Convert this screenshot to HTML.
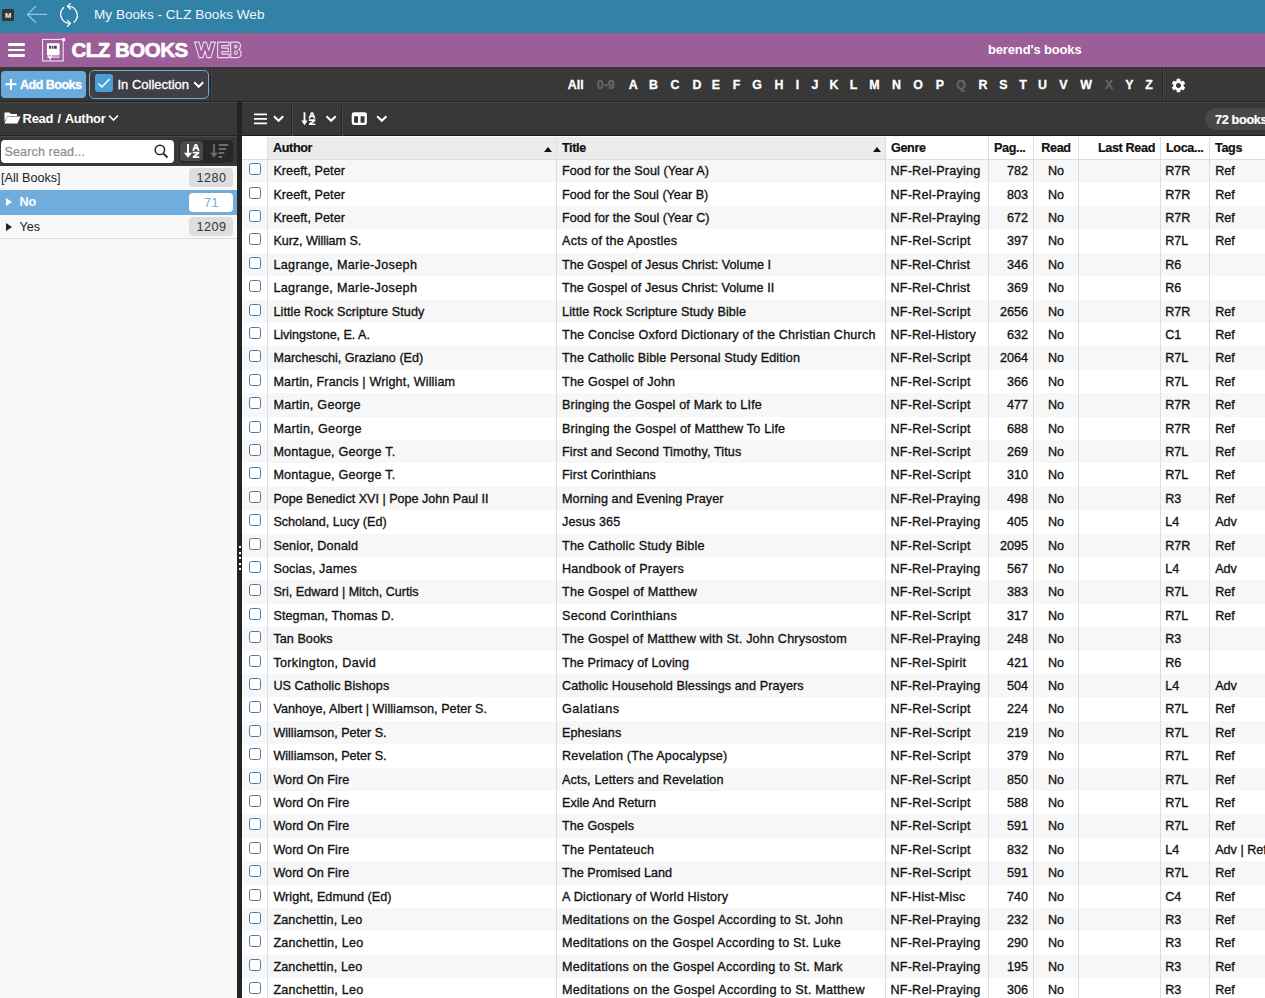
<!DOCTYPE html>
<html><head><meta charset="utf-8">
<style>
*{box-sizing:border-box;margin:0;padding:0}
html,body{width:1265px;height:998px;overflow:hidden;background:#f8f8f8;font-family:"Liberation Sans",sans-serif;}
.abs{position:absolute}
#tb{position:absolute;left:0;top:0;width:1265px;height:33px;background:#3282a7;}
#tb .m{position:absolute;left:2px;top:9px;width:12px;height:12px;background:#353535;color:#f4f4f4;font-size:7.5px;line-height:14px;text-align:center;font-weight:700;border-radius:1.5px}
#tb .ttl{position:absolute;left:94px;top:7px;font-size:13.6px;color:#eef8fc;line-height:16px;white-space:nowrap}
#pb{position:absolute;left:0;top:33px;width:1265px;height:34px;background:#9b5e98;}
#pb .ham{position:absolute;left:8px;top:10px;width:17px;height:14px}
#pb .ham i{position:absolute;left:0;width:17px;height:2.6px;background:#fff;border-radius:1.3px}
#pb .logo{position:absolute;left:42px;top:6px;width:23px;height:23px}
#pb .brand{position:absolute;left:71.5px;top:5px;font-size:20.5px;font-weight:700;color:#fff;white-space:nowrap;line-height:24px;-webkit-text-stroke:0.7px #fff;letter-spacing:-0.5px}
#pb .web{position:absolute;left:195px;top:5px;font-size:20.5px;font-weight:700;color:transparent;-webkit-text-stroke:1px #f3dcf3;white-space:nowrap;line-height:24px;letter-spacing:-0.2px}
#pb .user{position:absolute;left:988px;top:9px;font-size:13px;font-weight:700;color:#fff;white-space:nowrap;line-height:16px;letter-spacing:-0.15px}
#t1{position:absolute;left:0;top:67px;width:1265px;height:35px;background:#383838;border-bottom:1px solid #232323}
#addb{position:absolute;left:1px;top:4px;width:85px;height:27px;background:#6aabdd;border-radius:4px;color:#fff}
#addb .pl{position:absolute;left:4px;top:7.5px;width:12px;height:11px}
#addb .tx{position:absolute;left:19px;top:7px;font-size:12.6px;font-weight:700;line-height:15px;letter-spacing:-0.55px;white-space:nowrap;-webkit-text-stroke:0.3px #fff}
#coll{position:absolute;left:89px;top:3px;width:120px;height:29px;background:#3e3e45;border:1.3px solid #7ea6c9;border-radius:5px;color:#fff}
#coll .cbx{position:absolute;left:4.9px;top:2.9px;width:18px;height:18px;background:#4aa0d6;border-radius:3px}
#coll .tx{position:absolute;left:27.5px;top:6px;font-size:13px;line-height:15px;white-space:nowrap;letter-spacing:0px;-webkit-text-stroke:0.3px #fff}
.vd{position:absolute;width:1px;background:#2a2a2a}
#letters{position:absolute;left:560px;top:11px;height:14px;white-space:nowrap;font-size:12.4px;font-weight:700;line-height:14px}
#letters span{position:absolute;top:0;width:30px;text-align:center}
#letters .on{color:#fff;-webkit-text-stroke:0.3px #fff}
#letters .off{color:#666;-webkit-text-stroke:0.3px #666}
/* left panel */
#lph{position:absolute;left:0;top:102px;width:237px;height:34px;background:#383838;border-top:1px solid #4a4a4a;border-bottom:1px solid #242424}
#lph .tx{position:absolute;left:22.6px;top:8px;font-size:13px;font-weight:700;color:#fff;line-height:15px;white-space:nowrap;letter-spacing:-0.3px;word-spacing:1px}
#lps{position:absolute;left:0;top:136px;width:237px;height:30px;background:#383838;border-top:1px solid #4a4a4a}
#search{position:absolute;left:1px;top:3px;width:173px;height:23px;background:#fff;border-radius:4px}
#search .ph{position:absolute;left:3.5px;top:4.5px;font-size:12.6px;color:#8c8c8c;line-height:14px;letter-spacing:0.1px;-webkit-text-stroke:0.2px #8c8c8c}
#sortg{position:absolute;left:179px;top:3px;width:54px;height:23px;background:#272727;border-radius:5px}
#sortg .act{position:absolute;left:1.3px;top:1.3px;width:23.2px;height:19.7px;background:#4a4a4a;border-radius:4px}
#tree{position:absolute;left:0;top:166px;width:237px}
.tr{position:relative;height:24.3px;background:#f8f8f8;color:#222;font-size:12.6px;line-height:16px}
.tr .lb{position:absolute;top:4px;white-space:nowrap}
.tr .ct{position:absolute;left:189px;top:2px;width:44px;height:19px;border-radius:4px;background:#dedede;text-align:center;line-height:20px;color:#333;letter-spacing:0.5px;padding-left:1px}
.tr.sel{background:#70addd;color:#fff;font-weight:700}
.tr.sel .ct{background:#fff;color:#70addd;font-weight:400}
.tri{position:absolute;left:5.5px;top:8px;width:0;height:0;border-left:6px solid #222;border-top:4.5px solid transparent;border-bottom:4.5px solid transparent}
#splt{position:absolute;left:237px;top:102px;width:5px;height:897px;background:#232323}
#splt i{position:absolute;left:2px;width:2px;height:2px;background:#fff}
/* main */
#t2{position:absolute;left:242px;top:102px;width:1023px;height:34px;background:#373737;border-top:1px solid #4a4a4a;border-bottom:1px solid #1c1c1c}
#pill{position:absolute;left:963px;top:4.5px;width:90px;height:22.5px;background:#484848;border-radius:11px;color:#fff;font-weight:700;font-size:12.6px;line-height:24px;-webkit-text-stroke:0.2px #fff;padding-left:10px;white-space:nowrap;letter-spacing:-0.3px}
#grid{position:absolute;left:242px;top:136px;width:1023px;height:862px;background:#fff;overflow:hidden}
.hd{position:absolute;z-index:2;left:0;top:0;width:1100px;height:24px;background:#fff;border-bottom:1px solid #dcdcdc;border-top:1px solid #fdfdfd}
.hd .c{font-weight:700;height:22px;line-height:22.5px;letter-spacing:-0.35px;padding-left:5px;-webkit-text-stroke:0.2px #111}
.hd .srt{background:#ececec}
.r{position:absolute;left:0;width:1100px;height:23.4px;background:#fff}
.r.odd{background:#f7f7f7}
.c{position:absolute;top:0;height:100%;white-space:nowrap;overflow:hidden;font-size:12.6px;line-height:24.2px;color:#111;padding:0 6px;-webkit-text-stroke:0.32px #111;border-right:1px solid #dedede;text-overflow:clip}
.cb{left:0;width:26px;border-right:1px solid #dcdfe3;padding:0}
.au{left:26px;width:289px;padding-left:5.4px}
.ti{left:315px;width:329px;padding-left:5px}
.ge{left:644px;width:103px;padding-left:4.4px}
.pg{left:747px;width:45px;text-align:right;padding-right:5px}
.rd{left:792px;width:45px;text-align:center;padding:0}
.lr{left:837px;width:82px;text-align:right;padding-right:5px}
.lo{left:919px;width:49px;padding-left:4.2px}
.tg{left:968px;width:100px;border-right:none;padding-left:5.2px}
.chk{position:absolute;left:6.7px;top:3.6px;width:12.4px;height:12.2px;border:1.7px solid #4f7aa2;border-radius:2.5px;background:#fff}
.sortar{position:absolute;top:10px;width:0;height:0;border-left:4.5px solid transparent;border-right:4.5px solid transparent;border-bottom:5px solid #111}
</style></head>
<body>
<div id="tb">
  <div class="m">M</div>
  <svg class="abs" style="left:26px;top:5px" width="22" height="20" viewBox="0 0 22 20"><path d="M21 9.4H1.5M10 1L1.5 9.4l8.5 8.4" fill="none" stroke="#93c6df" stroke-width="1.2"/></svg>
  <svg class="abs" style="left:58px;top:3px" width="24" height="26" viewBox="0 0 24 26"><g fill="none" stroke="#fff" stroke-width="1.3" stroke-linecap="round"><path d="M5.7 4.6A9 9 0 0 0 11.8 20.3"/><path d="M9.5 17.4L12.4 20.3L9.5 23.2"/><path d="M16 19.2A9 9 0 0 0 9.8 3.3"/><path d="M12.3 0.6L9.5 3.3L12.3 6"/></g></svg>
  <div class="ttl">My Books - CLZ Books Web</div>
</div>
<div id="pb">
  <div class="ham"><i style="top:0"></i><i style="top:5.5px"></i><i style="top:11px"></i></div>
  <svg class="abs" style="left:40px;top:3px" width="28" height="28" viewBox="40 36 28 28"><rect x="42.6" y="39.4" width="20.6" height="21.6" fill="none" stroke="#f6e4f6" stroke-width="1.1"/><rect x="62" y="38" width="3.2" height="3.2" fill="#f6e4f6"/><rect x="46.9" y="43.2" width="12.7" height="12" rx="0.8" fill="#fff"/><path d="M49 45.8h2.2v3h-2.2zM52 45.8h1v3h-1zM53.6 45.8h3.2v3h-3.2z" fill="#4a4050"/><rect x="47.2" y="55.2" width="12.4" height="2" fill="#c9a6c8"/><path d="M47.2 57.4h12.4" stroke="#f3e0f3" stroke-width="0.8"/><path d="M48.5 55.5l1.6 3.6 1.6-3.6" fill="none" stroke="#fff" stroke-width="1.2"/></svg>
  <div class="brand">CLZ BOOKS</div>
  <svg class="abs" style="left:190px;top:3px" width="56" height="28" viewBox="190 36 56 28"><g fill="none" stroke="#f2d8f1" stroke-width="1.1" stroke-linejoin="round">
<path d="M194.6 42.1H199.1L201.3 50.3L203.6 42.1H206.4L208.7 50.3L210.9 42.1H215.4L210.9 57.6H206.9L205 50.9L203.1 57.6H199.1Z"/>
<path d="M217.6 42.1H229.1V45.6H221.8V48.1H228.4V51.6H221.8V54.1H229.1V57.6H217.6Z"/>
<path d="M230.7 42.1H236.4Q240.5 42.1 240.5 45.9Q240.5 48.5 238.6 49.6Q241.1 50.6 241.1 53.4Q241.1 57.6 236.6 57.6H230.7Z"/>
<path d="M234.8 45.3H236Q237 45.3 237 46.6Q237 47.9 236 47.9H234.8Z"/>
<path d="M234.8 51H236.3Q237.4 51 237.4 52.6Q237.4 54.2 236.3 54.2H234.8Z"/>
</g></svg>
  <div class="user">berend's books</div>
</div>
<div id="t1">
  <div id="addb"><svg class="pl" width="12" height="11" viewBox="0 0 12 11"><path d="M6 0v11M0.5 5.3h11" stroke="#fff" stroke-width="2"/></svg><div class="tx">Add Books</div></div>
  <div id="coll"><div class="cbx"><svg width="18" height="18" viewBox="0 0 18 18"><path d="M3.5 9.5l3.5 3.5 7.5-8" fill="none" stroke="#fff" stroke-width="1.4"/></svg></div><div class="tx">In Collection</div>
  <svg class="abs" style="left:103px;top:9.5px" width="12" height="8" viewBox="0 0 12 8"><path d="M1.2 1.3l4.5 4.5 4.5-4.5" fill="none" stroke="#fff" stroke-width="2"/></svg></div>
  <div class="vd" style="left:210px;top:1px;height:33px;background:#262626"></div><div class="vd" style="left:211px;top:1px;height:33px;background:#474747"></div>
  <div id="letters"><span class="on" style="left:0.75px">All</span><span class="off" style="left:30.75px">0-9</span><span class="on" style="left:58.25px">A</span><span class="on" style="left:78.50px">B</span><span class="on" style="left:100.00px">C</span><span class="on" style="left:122.00px">D</span><span class="on" style="left:141.00px">E</span><span class="on" style="left:161.50px">F</span><span class="on" style="left:182.00px">G</span><span class="on" style="left:204.00px">H</span><span class="on" style="left:222.60px">I</span><span class="on" style="left:240.00px">J</span><span class="on" style="left:259.00px">K</span><span class="on" style="left:278.50px">L</span><span class="on" style="left:299.50px">M</span><span class="on" style="left:321.50px">N</span><span class="on" style="left:343.00px">O</span><span class="on" style="left:365.00px">P</span><span class="off" style="left:386.00px">Q</span><span class="on" style="left:408.00px">R</span><span class="on" style="left:428.30px">S</span><span class="on" style="left:448.00px">T</span><span class="on" style="left:467.50px">U</span><span class="on" style="left:488.50px">V</span><span class="on" style="left:511.00px">W</span><span class="off" style="left:534.00px">X</span><span class="on" style="left:554.50px">Y</span><span class="on" style="left:574.00px">Z</span></div>
  <div class="vd" style="left:1162px;top:1px;height:33px;background:#262626"></div><div class="vd" style="left:1163px;top:1px;height:33px;background:#474747"></div>
  <svg class="abs" style="left:1170px;top:9.5px" width="17" height="17" viewBox="0 0 24 24"><path fill="#fff" d="M19.14 12.94c.04-.3.06-.61.06-.94 0-.32-.02-.64-.07-.94l2.03-1.58a.49.49 0 0 0 .12-.61l-1.92-3.32a.488.488 0 0 0-.59-.22l-2.39.96c-.5-.38-1.03-.7-1.62-.94l-.36-2.54a.484.484 0 0 0-.48-.41h-3.84c-.24 0-.43.17-.47.41l-.36 2.54c-.59.24-1.13.57-1.62.94l-2.39-.96c-.22-.08-.47 0-.59.22L2.74 8.87c-.12.21-.08.47.12.61l2.03 1.58c-.05.3-.09.63-.09.94s.02.64.07.94l-2.03 1.58a.49.49 0 0 0-.12.61l1.92 3.32c.12.22.37.29.59.22l2.39-.96c.5.38 1.03.7 1.62.94l.36 2.54c.05.24.24.41.48.41h3.84c.24 0 .44-.17.47-.41l.36-2.54c.59-.24 1.13-.56 1.62-.94l2.39.96c.22.08.47 0 .59-.22l1.92-3.32c.12-.22.07-.47-.12-.61l-2.01-1.58zM12 15.6c-1.98 0-3.6-1.62-3.6-3.6s1.62-3.6 3.6-3.6 3.6 1.62 3.6 3.6-1.62 3.6-3.6 3.6z"/></svg>
</div>
<div id="lph">
  <svg class="abs" style="left:4px;top:8px" width="17" height="13" viewBox="0 0 17 13"><path d="M0.5 1.5h5l1.5 1.5h6v2H3.5L0.5 11z" fill="#fff"/><path d="M3.5 5.5h13l-3 7H0.5z" fill="#fff"/></svg>
  <div class="tx">Read / Author</div>
  <svg class="abs" style="left:108px;top:11px" width="11" height="8" viewBox="0 0 11 8"><path d="M1 1.5l4.5 4.5 4.5-4.5" fill="none" stroke="#fff" stroke-width="1.6"/></svg>
</div>
<div id="lps">
  <div id="search"><div class="ph">Search read...</div>
  <svg class="abs" style="left:153px;top:4px" width="15" height="15" viewBox="0 0 15 15"><circle cx="5.9" cy="5.9" r="4.7" fill="none" stroke="#222" stroke-width="1.5"/><path d="M9.3 9.3l4.2 4.2" stroke="#222" stroke-width="1.8"/></svg></div>
  <div id="sortg"><div class="act"></div>
  <svg class="abs" style="left:0;top:0" width="54" height="23" viewBox="179 140 54 23">
    <path d="M188 143.9v10.5" stroke="#fff" stroke-width="1.9"/>
    <path d="M183.9 152.8h8.2l-4.1 5z" fill="#fff"/>
    <path d="M192.10 150.80 L194.84 143.90 L196.96 143.90 L199.70 150.80 L197.65 150.80 L196.96 149.08 L194.84 149.08 L194.15 150.80ZM195.29 147.56 L196.51 147.56 L195.90 145.62Z" fill="#fff" fill-rule="evenodd"/>
    <path d="M192.80 151.80 L199.30 151.80 L199.30 153.51 L195.73 156.19 L199.30 156.19 L199.30 157.90 L192.80 157.90 L192.80 156.19 L196.38 153.51 L192.80 153.51Z" fill="#fff"/>
    <path d="M214 143.9v10.5" stroke="#6c6c6c" stroke-width="1.9"/>
    <path d="M210.2 152.8h7.6l-3.8 5z" fill="#6c6c6c"/>
    <path d="M218.7 145h9.5M218.7 149h7.5M218.7 153h5.6M218.7 157h3.5" stroke="#6c6c6c" stroke-width="2"/>
  </svg></div>
</div>
<div id="tree">
  <div class="tr" style="height:24px"><div class="lb" style="left:1px">[All Books]</div><div class="ct">1280</div></div>
  <div class="tr sel" style="height:25px"><i class="tri" style="border-left-color:#fff"></i><div class="lb" style="left:19.5px;top:4px">No</div><div class="ct" style="top:3px">71</div></div>
  <div class="tr" style="height:24px;border-bottom:1px solid #dadada"><i class="tri"></i><div class="lb" style="left:19.5px">Yes</div><div class="ct">1209</div></div>
</div>
<div id="splt"><i style="top:444px"></i><i style="top:449.5px"></i><i style="top:455px"></i><i style="top:460.5px"></i><i style="top:466px"></i></div>
<div id="t2">
  <svg class="abs" style="left:0;top:0" width="160" height="35" viewBox="242 103 160 35">
    <path d="M254 114.4h13M254 118.9h13M254 123.4h13" stroke="#fff" stroke-width="1.9"/>
    <path d="M274 116.2l4.6 4.6 4.6-4.6" fill="none" stroke="#fff" stroke-width="2.1"/>
    <path d="M304.5 112.3v10.5" stroke="#fff" stroke-width="1.9"/>
    <path d="M301.4 120.6h6.2l-3.1 4.6z" fill="#fff"/>
    <path d="M308.40 118.50 L310.99 112.30 L313.01 112.30 L315.60 118.50 L313.66 118.50 L313.01 116.95 L310.99 116.95 L310.34 118.50ZM311.42 115.59 L312.58 115.59 L312.00 113.85Z" fill="#fff" fill-rule="evenodd"/>
    <path d="M309.00 119.30 L315.30 119.30 L315.30 120.92 L311.83 123.48 L315.30 123.48 L315.30 125.10 L309.00 125.10 L309.00 123.48 L312.47 120.92 L309.00 120.92Z" fill="#fff"/>
    <path d="M326.5 116.2l4.6 4.6 4.6-4.6" fill="none" stroke="#fff" stroke-width="2.1"/>
    <rect x="352.9" y="113.5" width="12.8" height="10.4" rx="1.2" fill="none" stroke="#fff" stroke-width="2.4"/>
    <path d="M352 115h15M359.3 113v11" stroke="#fff" stroke-width="2.6"/>
    <path d="M377.2 116.2l4.6 4.6 4.6-4.6" fill="none" stroke="#fff" stroke-width="2.1"/>
  </svg>
  <div class="vd" style="left:49px;top:2px;height:31px;background:#262626"></div><div class="vd" style="left:50px;top:2px;height:31px;background:#474747"></div>
  <div class="vd" style="left:99px;top:2px;height:31px;background:#262626"></div><div class="vd" style="left:100px;top:2px;height:31px;background:#474747"></div>
  <div id="pill">72 books</div>
</div>
<div id="grid">
  <div class="hd">
    <div class="c cb"></div>
    <div class="c au srt">Author<i class="sortar" style="left:276px"></i></div>
    <div class="c ti srt">Title<i class="sortar" style="left:316px"></i></div>
    <div class="c ge">Genre</div>
    <div class="c pg" style="padding-right:8px">Pag...</div>
    <div class="c rd" style="padding:0">Read</div>
    <div class="c lr">Last Read</div>
    <div class="c lo">Loca...</div>
    <div class="c tg">Tags</div>
  </div>
  <div id="rows" style="position:absolute;left:0;top:-136px;width:1100px">
<div class="r odd" style="top:159px;height:24px"><div class="c cb"><i class="chk"></i></div><div class="c au" style="letter-spacing:0.067px">Kreeft, Peter</div><div class="c ti" style="letter-spacing:0.072px">Food for the Soul (Year A)</div><div class="c ge" style="letter-spacing:0.246px">NF-Rel-Praying</div><div class="c pg">782</div><div class="c rd">No</div><div class="c lr"></div><div class="c lo">R7R</div><div class="c tg">Ref</div></div>
<div class="r" style="top:183px;height:23px"><div class="c cb"><i class="chk"></i></div><div class="c au" style="letter-spacing:0.067px">Kreeft, Peter</div><div class="c ti" style="letter-spacing:0.016px">Food for the Soul (Year B)</div><div class="c ge" style="letter-spacing:0.246px">NF-Rel-Praying</div><div class="c pg">803</div><div class="c rd">No</div><div class="c lr"></div><div class="c lo">R7R</div><div class="c tg">Ref</div></div>
<div class="r odd" style="top:206px;height:23px"><div class="c cb"><i class="chk"></i></div><div class="c au" style="letter-spacing:0.067px">Kreeft, Peter</div><div class="c ti" style="letter-spacing:0.040px">Food for the Soul (Year C)</div><div class="c ge" style="letter-spacing:0.246px">NF-Rel-Praying</div><div class="c pg">672</div><div class="c rd">No</div><div class="c lr"></div><div class="c lo">R7R</div><div class="c tg">Ref</div></div>
<div class="r" style="top:229px;height:24px"><div class="c cb"><i class="chk"></i></div><div class="c au" style="letter-spacing:-0.067px">Kurz, William S.</div><div class="c ti" style="letter-spacing:0.232px">Acts of the Apostles</div><div class="c ge" style="letter-spacing:0.317px">NF-Rel-Script</div><div class="c pg">397</div><div class="c rd">No</div><div class="c lr"></div><div class="c lo">R7L</div><div class="c tg">Ref</div></div>
<div class="r odd" style="top:253px;height:23px"><div class="c cb"><i class="chk"></i></div><div class="c au" style="letter-spacing:0.333px">Lagrange, Marie-Joseph</div><div class="c ti" style="letter-spacing:0.034px">The Gospel of Jesus Christ: Volume I</div><div class="c ge" style="letter-spacing:0.225px">NF-Rel-Christ</div><div class="c pg">346</div><div class="c rd">No</div><div class="c lr"></div><div class="c lo">R6</div><div class="c tg"></div></div>
<div class="r" style="top:276px;height:24px"><div class="c cb"><i class="chk"></i></div><div class="c au" style="letter-spacing:0.333px">Lagrange, Marie-Joseph</div><div class="c ti" style="letter-spacing:0.022px">The Gospel of Jesus Christ: Volume II</div><div class="c ge" style="letter-spacing:0.225px">NF-Rel-Christ</div><div class="c pg">369</div><div class="c rd">No</div><div class="c lr"></div><div class="c lo">R6</div><div class="c tg"></div></div>
<div class="r odd" style="top:300px;height:23px"><div class="c cb"><i class="chk"></i></div><div class="c au" style="letter-spacing:0.100px">Little Rock Scripture Study</div><div class="c ti" style="letter-spacing:0.125px">Little Rock Scripture Study Bible</div><div class="c ge" style="letter-spacing:0.317px">NF-Rel-Script</div><div class="c pg">2656</div><div class="c rd">No</div><div class="c lr"></div><div class="c lo">R7R</div><div class="c tg">Ref</div></div>
<div class="r" style="top:323px;height:23px"><div class="c cb"><i class="chk"></i></div><div class="c au" style="letter-spacing:-0.047px">Livingstone, E. A.</div><div class="c ti" style="letter-spacing:0.185px">The Concise Oxford Dictionary of the Christian Church</div><div class="c ge" style="letter-spacing:0.169px">NF-Rel-History</div><div class="c pg">632</div><div class="c rd">No</div><div class="c lr"></div><div class="c lo">C1</div><div class="c tg">Ref</div></div>
<div class="r odd" style="top:346px;height:24px"><div class="c cb"><i class="chk"></i></div><div class="c au">Marcheschi, Graziano (Ed)</div><div class="c ti" style="letter-spacing:0.120px">The Catholic Bible Personal Study Edition</div><div class="c ge" style="letter-spacing:0.317px">NF-Rel-Script</div><div class="c pg">2064</div><div class="c rd">No</div><div class="c lr"></div><div class="c lo">R7L</div><div class="c tg">Ref</div></div>
<div class="r" style="top:370px;height:23px"><div class="c cb"><i class="chk"></i></div><div class="c au" style="letter-spacing:0.138px">Martin, Francis | Wright, William</div><div class="c ti" style="letter-spacing:0.188px">The Gospel of John</div><div class="c ge" style="letter-spacing:0.317px">NF-Rel-Script</div><div class="c pg">366</div><div class="c rd">No</div><div class="c lr"></div><div class="c lo">R7L</div><div class="c tg">Ref</div></div>
<div class="r odd" style="top:393px;height:24px"><div class="c cb"><i class="chk"></i></div><div class="c au" style="letter-spacing:0.246px">Martin, George</div><div class="c ti" style="letter-spacing:0.153px">Bringing the Gospel of Mark to LIfe</div><div class="c ge" style="letter-spacing:0.317px">NF-Rel-Script</div><div class="c pg">477</div><div class="c rd">No</div><div class="c lr"></div><div class="c lo">R7R</div><div class="c tg">Ref</div></div>
<div class="r" style="top:417px;height:23px"><div class="c cb"><i class="chk"></i></div><div class="c au" style="letter-spacing:0.323px">Martin, George</div><div class="c ti" style="letter-spacing:0.189px">Bringing the Gospel of Matthew To Life</div><div class="c ge" style="letter-spacing:0.317px">NF-Rel-Script</div><div class="c pg">688</div><div class="c rd">No</div><div class="c lr"></div><div class="c lo">R7R</div><div class="c tg">Ref</div></div>
<div class="r odd" style="top:440px;height:23px"><div class="c cb"><i class="chk"></i></div><div class="c au" style="letter-spacing:0.211px">Montague, George T.</div><div class="c ti" style="letter-spacing:0.127px">First and Second Timothy, Titus</div><div class="c ge" style="letter-spacing:0.317px">NF-Rel-Script</div><div class="c pg">269</div><div class="c rd">No</div><div class="c lr"></div><div class="c lo">R7L</div><div class="c tg">Ref</div></div>
<div class="r" style="top:463px;height:24px"><div class="c cb"><i class="chk"></i></div><div class="c au" style="letter-spacing:0.211px">Montague, George T.</div><div class="c ti" style="letter-spacing:0.137px">First Corinthians</div><div class="c ge" style="letter-spacing:0.317px">NF-Rel-Script</div><div class="c pg">310</div><div class="c rd">No</div><div class="c lr"></div><div class="c lo">R7L</div><div class="c tg">Ref</div></div>
<div class="r odd" style="top:487px;height:23px"><div class="c cb"><i class="chk"></i></div><div class="c au" style="letter-spacing:-0.011px">Pope Benedict XVI | Pope John Paul II</div><div class="c ti" style="letter-spacing:0.072px">Morning and Evening Prayer</div><div class="c ge" style="letter-spacing:0.246px">NF-Rel-Praying</div><div class="c pg">498</div><div class="c rd">No</div><div class="c lr"></div><div class="c lo">R3</div><div class="c tg">Ref</div></div>
<div class="r" style="top:510px;height:24px"><div class="c cb"><i class="chk"></i></div><div class="c au" style="letter-spacing:-0.011px">Scholand, Lucy (Ed)</div><div class="c ti" style="letter-spacing:0.100px">Jesus 365</div><div class="c ge" style="letter-spacing:0.246px">NF-Rel-Praying</div><div class="c pg">405</div><div class="c rd">No</div><div class="c lr"></div><div class="c lo">L4</div><div class="c tg">Adv</div></div>
<div class="r odd" style="top:534px;height:23px"><div class="c cb"><i class="chk"></i></div><div class="c au" style="letter-spacing:0.154px">Senior, Donald</div><div class="c ti" style="letter-spacing:0.200px">The Catholic Study Bible</div><div class="c ge" style="letter-spacing:0.317px">NF-Rel-Script</div><div class="c pg">2095</div><div class="c rd">No</div><div class="c lr"></div><div class="c lo">R7R</div><div class="c tg">Ref</div></div>
<div class="r" style="top:557px;height:23px"><div class="c cb"><i class="chk"></i></div><div class="c au" style="letter-spacing:0.117px">Socias, James</div><div class="c ti" style="letter-spacing:0.189px">Handbook of Prayers</div><div class="c ge" style="letter-spacing:0.246px">NF-Rel-Praying</div><div class="c pg">567</div><div class="c rd">No</div><div class="c lr"></div><div class="c lo">L4</div><div class="c tg">Adv</div></div>
<div class="r odd" style="top:580px;height:24px"><div class="c cb"><i class="chk"></i></div><div class="c au" style="letter-spacing:-0.008px">Sri, Edward | Mitch, Curtis</div><div class="c ti" style="letter-spacing:0.230px">The Gospel of Matthew</div><div class="c ge" style="letter-spacing:0.317px">NF-Rel-Script</div><div class="c pg">383</div><div class="c rd">No</div><div class="c lr"></div><div class="c lo">R7L</div><div class="c tg">Ref</div></div>
<div class="r" style="top:604px;height:23px"><div class="c cb"><i class="chk"></i></div><div class="c au" style="letter-spacing:0.106px">Stegman, Thomas D.</div><div class="c ti" style="letter-spacing:0.282px">Second Corinthians</div><div class="c ge" style="letter-spacing:0.317px">NF-Rel-Script</div><div class="c pg">317</div><div class="c rd">No</div><div class="c lr"></div><div class="c lo">R7L</div><div class="c tg">Ref</div></div>
<div class="r odd" style="top:627px;height:24px"><div class="c cb"><i class="chk"></i></div><div class="c au" style="letter-spacing:0.050px">Tan Books</div><div class="c ti" style="letter-spacing:0.182px">The Gospel of Matthew with St. John Chrysostom</div><div class="c ge" style="letter-spacing:0.246px">NF-Rel-Praying</div><div class="c pg">248</div><div class="c rd">No</div><div class="c lr"></div><div class="c lo">R3</div><div class="c tg"></div></div>
<div class="r" style="top:651px;height:23px"><div class="c cb"><i class="chk"></i></div><div class="c au" style="letter-spacing:0.312px">Torkington, David</div><div class="c ti" style="letter-spacing:0.080px">The Primacy of Loving</div><div class="c ge" style="letter-spacing:0.242px">NF-Rel-Spirit</div><div class="c pg">421</div><div class="c rd">No</div><div class="c lr"></div><div class="c lo">R6</div><div class="c tg"></div></div>
<div class="r odd" style="top:674px;height:23px"><div class="c cb"><i class="chk"></i></div><div class="c au" style="letter-spacing:0.056px">US Catholic Bishops</div><div class="c ti" style="letter-spacing:0.092px">Catholic Household Blessings and Prayers</div><div class="c ge" style="letter-spacing:0.246px">NF-Rel-Praying</div><div class="c pg">504</div><div class="c rd">No</div><div class="c lr"></div><div class="c lo">L4</div><div class="c tg">Adv</div></div>
<div class="r" style="top:697px;height:24px"><div class="c cb"><i class="chk"></i></div><div class="c au" style="letter-spacing:0.054px">Vanhoye, Albert | Williamson, Peter S.</div><div class="c ti" style="letter-spacing:0.475px">Galatians</div><div class="c ge" style="letter-spacing:0.317px">NF-Rel-Script</div><div class="c pg">224</div><div class="c rd">No</div><div class="c lr"></div><div class="c lo">R7L</div><div class="c tg">Ref</div></div>
<div class="r odd" style="top:721px;height:23px"><div class="c cb"><i class="chk"></i></div><div class="c au" style="letter-spacing:-0.011px">Williamson, Peter S.</div><div class="c ti" style="letter-spacing:0.050px">Ephesians</div><div class="c ge" style="letter-spacing:0.317px">NF-Rel-Script</div><div class="c pg">219</div><div class="c rd">No</div><div class="c lr"></div><div class="c lo">R7L</div><div class="c tg">Ref</div></div>
<div class="r" style="top:744px;height:24px"><div class="c cb"><i class="chk"></i></div><div class="c au" style="letter-spacing:-0.011px">Williamson, Peter S.</div><div class="c ti" style="letter-spacing:0.162px">Revelation (The Apocalypse)</div><div class="c ge" style="letter-spacing:0.317px">NF-Rel-Script</div><div class="c pg">379</div><div class="c rd">No</div><div class="c lr"></div><div class="c lo">R7L</div><div class="c tg">Ref</div></div>
<div class="r odd" style="top:768px;height:23px"><div class="c cb"><i class="chk"></i></div><div class="c au" style="letter-spacing:0.036px">Word On Fire</div><div class="c ti" style="letter-spacing:0.148px">Acts, Letters and Revelation</div><div class="c ge" style="letter-spacing:0.317px">NF-Rel-Script</div><div class="c pg">850</div><div class="c rd">No</div><div class="c lr"></div><div class="c lo">R7L</div><div class="c tg">Ref</div></div>
<div class="r" style="top:791px;height:23px"><div class="c cb"><i class="chk"></i></div><div class="c au" style="letter-spacing:0.036px">Word On Fire</div><div class="c ti" style="letter-spacing:0.013px">Exile And Return</div><div class="c ge" style="letter-spacing:0.317px">NF-Rel-Script</div><div class="c pg">588</div><div class="c rd">No</div><div class="c lr"></div><div class="c lo">R7L</div><div class="c tg">Ref</div></div>
<div class="r odd" style="top:814px;height:24px"><div class="c cb"><i class="chk"></i></div><div class="c au" style="letter-spacing:0.036px">Word On Fire</div><div class="c ti" style="letter-spacing:0.060px">The Gospels</div><div class="c ge" style="letter-spacing:0.317px">NF-Rel-Script</div><div class="c pg">591</div><div class="c rd">No</div><div class="c lr"></div><div class="c lo">R7L</div><div class="c tg">Ref</div></div>
<div class="r" style="top:838px;height:23px"><div class="c cb"><i class="chk"></i></div><div class="c au" style="letter-spacing:0.036px">Word On Fire</div><div class="c ti" style="letter-spacing:0.246px">The Pentateuch</div><div class="c ge" style="letter-spacing:0.317px">NF-Rel-Script</div><div class="c pg">832</div><div class="c rd">No</div><div class="c lr"></div><div class="c lo">L4</div><div class="c tg">Adv | Ref</div></div>
<div class="r odd" style="top:861px;height:24px"><div class="c cb"><i class="chk"></i></div><div class="c au" style="letter-spacing:0.036px">Word On Fire</div><div class="c ti" style="letter-spacing:0.012px">The Promised Land</div><div class="c ge" style="letter-spacing:0.317px">NF-Rel-Script</div><div class="c pg">591</div><div class="c rd">No</div><div class="c lr"></div><div class="c lo">R7L</div><div class="c tg">Ref</div></div>
<div class="r" style="top:885px;height:23px"><div class="c cb"><i class="chk"></i></div><div class="c au" style="letter-spacing:0.044px">Wright, Edmund (Ed)</div><div class="c ti" style="letter-spacing:0.214px">A Dictionary of World History</div><div class="c ge" style="letter-spacing:0.200px">NF-Hist-Misc</div><div class="c pg">740</div><div class="c rd">No</div><div class="c lr"></div><div class="c lo">C4</div><div class="c tg">Ref</div></div>
<div class="r odd" style="top:908px;height:23px"><div class="c cb"><i class="chk"></i></div><div class="c au" style="letter-spacing:0.143px">Zanchettin, Leo</div><div class="c ti" style="letter-spacing:0.261px">Meditations on the Gospel According to St. John</div><div class="c ge" style="letter-spacing:0.246px">NF-Rel-Praying</div><div class="c pg">232</div><div class="c rd">No</div><div class="c lr"></div><div class="c lo">R3</div><div class="c tg">Ref</div></div>
<div class="r" style="top:931px;height:24px"><div class="c cb"><i class="chk"></i></div><div class="c au" style="letter-spacing:0.214px">Zanchettin, Leo</div><div class="c ti" style="letter-spacing:0.217px">Meditations on the Gospel According to St. Luke</div><div class="c ge" style="letter-spacing:0.246px">NF-Rel-Praying</div><div class="c pg">290</div><div class="c rd">No</div><div class="c lr"></div><div class="c lo">R3</div><div class="c tg">Ref</div></div>
<div class="r odd" style="top:955px;height:23px"><div class="c cb"><i class="chk"></i></div><div class="c au" style="letter-spacing:0.143px">Zanchettin, Leo</div><div class="c ti" style="letter-spacing:0.239px">Meditations on the Gospel According to St. Mark</div><div class="c ge" style="letter-spacing:0.246px">NF-Rel-Praying</div><div class="c pg">195</div><div class="c rd">No</div><div class="c lr"></div><div class="c lo">R3</div><div class="c tg">Ref</div></div>
<div class="r" style="top:978px;height:24px"><div class="c cb"><i class="chk"></i></div><div class="c au" style="letter-spacing:0.214px">Zanchettin, Leo</div><div class="c ti" style="letter-spacing:0.273px">Meditations on the Gospel According to St. Matthew</div><div class="c ge" style="letter-spacing:0.246px">NF-Rel-Praying</div><div class="c pg">306</div><div class="c rd">No</div><div class="c lr"></div><div class="c lo">R3</div><div class="c tg">Ref</div></div>
  </div>
</div>
</body></html>
